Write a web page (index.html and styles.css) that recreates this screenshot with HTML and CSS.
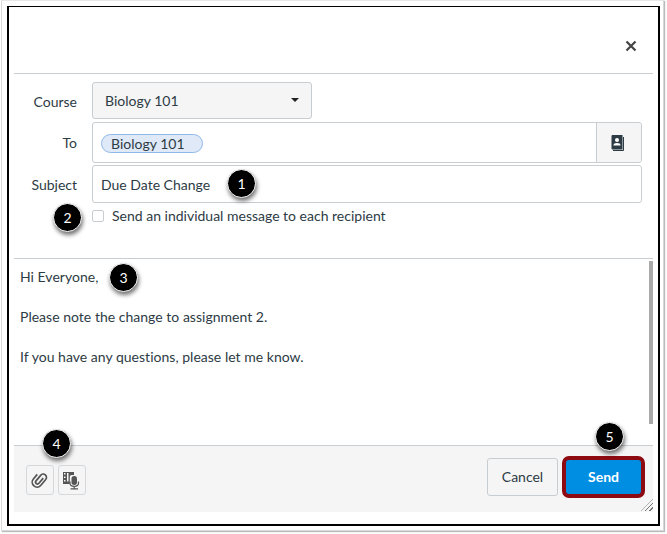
FILE: index.html
```html
<!DOCTYPE html>
<html lang="en">
<head>
  <meta charset="UTF-8" />
  <title>Compose Message</title>
  <link rel="stylesheet" href="styles.css">
</head>
<body>
  <div class="shot">
    <div class="dialog">
      <div class="head">
        <svg class="close" viewBox="0 0 12 12" width="12" height="12"><path d="M1.5 1.5l9 9M10.5 1.5l-9 9" /></svg>
      </div>
      <div class="fields">
        <div class="row course-row">
          <span class="label">Course</span>
          <div class="select">Biology 101<span class="caret"></span></div>
        </div>
        <div class="row to-row">
          <span class="label">To</span>
          <div class="to-box">
            <div class="to-input"><span class="pill">Biology 101</span></div>
            <div class="book">
              <svg viewBox="0 0 14 16" width="14" height="16">
                <path class="book-back" d="M12.500 2v13.500H2" />
                <path class="book-front" d="M0.500 1a1 1 0 0 1 1-1h10v14.500h-10a1 1 0 0 1-1-1z" />
                <circle class="book-mark" cx="6" cy="5" r="2" />
                <path class="book-mark" d="M2.500 10.500c0-2 1.200-2.600 3.500-2.600s3.500.6 3.500 2.600z" />
              </svg>
            </div>
          </div>
        </div>
        <div class="row subject-row">
          <span class="label">Subject</span>
          <div class="subject">Due Date Change</div>
        </div>
        <div class="row check-row">
          <span class="label"></span>
          <span class="checkbox"></span>
          <span>Send an individual message to each recipient</span>
        </div>
      </div>
      <div class="message">
        <div class="message-text">
          <p>Hi Everyone,</p>
          <p>Please note the change to assignment 2.</p>
          <p>If you have any questions, please let me know.</p>
        </div>
        <div class="scroll"></div>
      </div>
      <div class="foot">
        <div class="tools">
          <button class="tool">
            <svg viewBox="-9 -9 18 18" width="18" height="18"><path class="clip" transform="rotate(40)" d="M1.300 -3.500V3.200a1.900 1.900 0 0 1 -3.800 0V-4a3.300 3.300 0 0 1 6.600 0V3.500a4.900 4.900 0 0 1 -9.800 0V-2.500" /></svg>
          </button>
          <button class="tool">
            <svg viewBox="0 0 20 20" width="20" height="20">
              <path class="media" d="M1 2h11v3H9.800c-1.200 0-2 .8-2 2v7H1z" />
              <rect class="hole" x="2" y="3" width="1.500" height="1.500" />
              <rect class="hole" x="2" y="6.500" width="1.500" height="1.500" />
              <rect class="hole" x="2" y="10" width="1.500" height="1.500" />
              <rect class="hole" x="5" y="3" width="1.500" height="8.500" />
              <rect class="media" x="9.500" y="6" width="5.500" height="9" rx="2.700" />
              <path class="mic" d="M8 11.500v1.500c0 2.200 1.600 3.300 4.200 3.300s4.300-1.100 4.300-3.300v-1.500M12.200 16.300v2.200M8.500 18.900h7.500" />
            </svg>
          </button>
        </div>
        <div class="actions">
          <button class="cancel">Cancel</button>
          <button class="send">Send</button>
        </div>
        <div class="grip"></div>
      </div>
      <span class="badge b1">1</span>
      <span class="badge b2">2</span>
      <span class="badge b3">3</span>
      <span class="badge b4">4</span>
      <span class="badge b5">5</span>
    </div>
  </div>
</body>
</html>
```

FILE: styles.css
```css
* { box-sizing: border-box; }
html, body { margin: 0; padding: 0; height: 100%; background: #fff; color: #2d3b45; font-family: Lato, "Liberation Sans", sans-serif; font-size: 14px; }
.shot { width: 663px; height: 531px; margin-left: 1px; border: 1px solid #d8d8d8; border-top-color: #e8e8e8; padding: 5px 1px 4px 5px; box-shadow: 1px 1px 1px #bbb; }
.dialog { position: relative; width: 653px; height: 520px; border: 2px solid #000; border-top-width: 1px; padding: 0 5px 12px; display: flex; flex-direction: column; }

.head { height: 67px; border-bottom: 1px solid #c7cdd1; display: flex; justify-content: flex-end; align-items: flex-start; padding: 33px 16px 0 0; flex: none; }
.close { fill: none; stroke: #444; stroke-width: 2.2; }

.fields { height: 185px; border-bottom: 1px solid #c7cdd1; padding-top: 8px; flex: none; }
.row { display: flex; align-items: center; }
.label { width: 63px; margin-right: 15px; text-align: right; flex: none; }
.course-row .label { padding-top: 2px; }
.select { width: 220px; height: 37px; background: #f5f5f5; border: 1px solid #c7cdd1; border-radius: 3px; padding: 0 12px 1px; display: flex; align-items: center; justify-content: space-between; }
.caret { width: 0; height: 0; border: 4px solid transparent; border-top: 4px solid #222; border-bottom: 0; }
.to-row { margin-top: 3px; }
.to-box { width: 550px; height: 41px; border: 1px solid #c7cdd1; border-radius: 3px; display: flex; }
.to-input { flex: 1; padding: 11px 8px 0; }
.pill { display: inline-block; height: 19px; line-height: 17px; width: 102px; padding-left: 9px; background: #dfe9f7; border: 1px solid #8fb8ea; border-radius: 10px; }
.book { width: 45px; background: #f5f5f5; border-left: 1px solid #c7cdd1; display: flex; align-items: center; justify-content: center; padding-right: 3px; border-radius: 0 3px 3px 0; }
.book-back { fill: none; stroke: #2d3b45; stroke-width: 1; }
.book-front { fill: #2d3b45; }
.book-mark { fill: #fff; }
.subject-row { margin-top: 2px; }
.subject { width: 550px; height: 38px; border: 1px solid #c7cdd1; border-radius: 3px; padding: 0 8px; display: flex; align-items: center; }
.check-row { margin-top: 4px; height: 17px; }
.checkbox { width: 12px; height: 12px; border: 1px solid #c7cdd1; border-radius: 2px; margin-right: 8px; background: #fff; flex: none; }

.message { flex: 1; display: flex; justify-content: space-between; min-height: 0; }
.message-text { padding: 9px 0 0 6px; letter-spacing: .02px; }
.message-text p { margin: 0 0 23px; line-height: 17px; }
.scroll { width: 4px; height: 163px; margin-top: 2px; background: #a9a9a9; }

.foot { position: relative; height: 67px; flex: none; background: #f5f5f5; border-top: 1px solid #c7cdd1; padding: 10px 8px 0 12px; display: flex; justify-content: space-between; align-items: flex-start; }
.tools { display: flex; gap: 4px; padding-top: 9px; }
.tool { width: 28px; height: 30px; padding: 0; background: #f5f5f5; border: 1px solid #d5d9dc; border-radius: 3px; display: flex; align-items: center; justify-content: center; }
.clip { fill: none; stroke: #555; stroke-width: 1.700; }
.media { fill: #555; }
.hole { fill: #f5f5f5; }
.mic { fill: none; stroke: #555; stroke-width: 1.200; }
.actions { display: flex; gap: 4px; align-items: center; }
button { font-family: inherit; font-size: 14px; }
.cancel { width: 71px; height: 38px; padding: 0 0 2px; background: #f5f5f5; color: #2d3b45; border: 1px solid #c7cdd1; border-radius: 3px; }
.send { width: 83px; height: 42px; padding: 0 0 2px; background: #008ee2; color: #fff; font-weight: 700; border: 4px solid #8e0a11; border-radius: 7px; }
.grip { position: absolute; right: 0; bottom: 1px; width: 12px; height: 12px; background: repeating-linear-gradient(135deg, transparent 0 2px, #777 2px 3px); clip-path: polygon(100% 0, 100% 100%, 0 100%); }

.badge { position: absolute; width: 29px; height: 29px; border-radius: 50%; background: #000; color: #fff; font-size: 14px; display: flex; align-items: center; justify-content: center; border: 1px solid #fff; box-shadow: 1px 3px 4px rgba(0,0,0,.55); }
.b1 { left: 218px; top: 162px; }
.b2 { left: 44px; top: 196px; }
.b3 { left: 100px; top: 256px; }
.b4 { left: 33px; top: 422px; }
.b5 { left: 586px; top: 415px; }
```
